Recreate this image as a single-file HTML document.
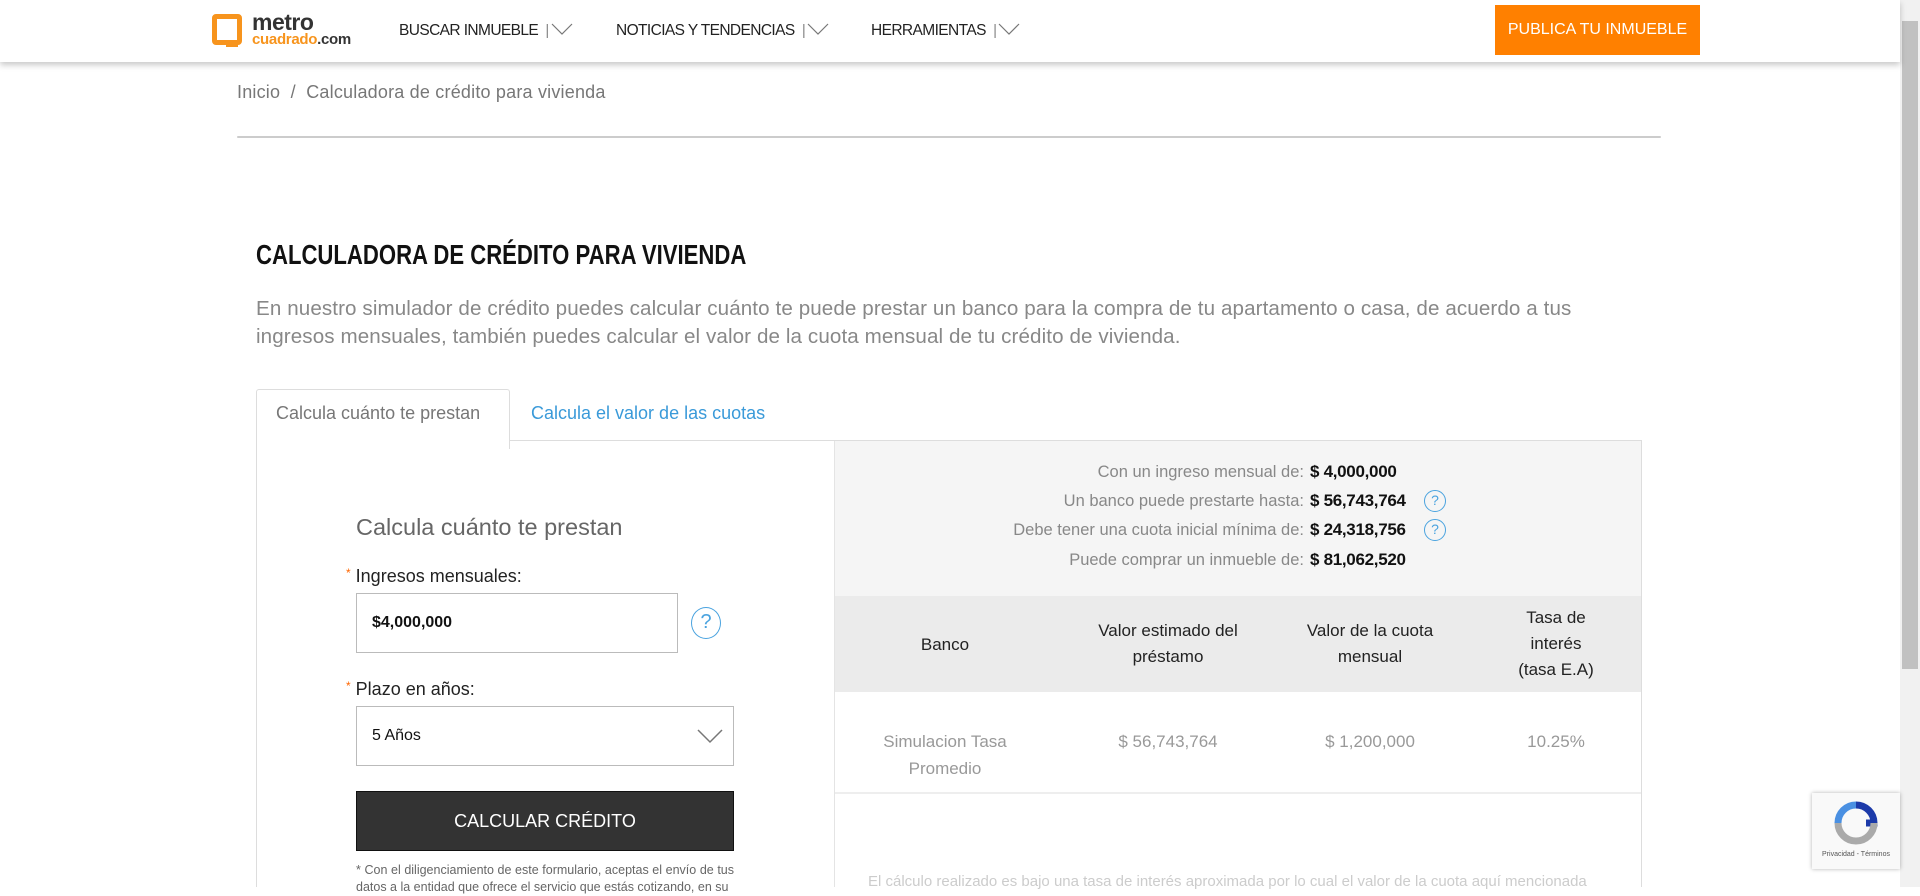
<!DOCTYPE html>
<html><head><meta charset="utf-8"><style>
*{box-sizing:border-box;margin:0;padding:0}
body{width:1920px;height:887px;overflow:hidden;background:#fff;font-family:"Liberation Sans",sans-serif;position:relative}
.a{position:absolute;white-space:nowrap}
.hdr{position:absolute;left:0;top:0;width:1900px;height:62px;background:#fff;box-shadow:0 3px 6px rgba(0,0,0,.22);z-index:2}
.nav{font-size:15.5px;color:#222;top:22px;letter-spacing:-0.6px}
.nav .c{color:#888;font-size:15px}
.sb{position:absolute;left:1900px;top:0;width:20px;height:887px;background:#f1f1f1}
.sb div{position:absolute;left:2px;top:21px;width:16px;height:648px;background:#c1c1c1}
.lbl{font-size:16.5px;color:#888;text-align:right;width:420px;left:884px}
.val{font-size:17px;color:#111;left:1310px;font-weight:bold;letter-spacing:-0.3px}
.q{position:absolute;width:22px;height:22px;border:1.5px solid #4aa3df;border-radius:50%;color:#4aa3df;font-size:14px;text-align:center;line-height:19px}
.th{font-size:17px;color:#222;text-align:center;line-height:26px}
.td{font-size:17px;color:#999;text-align:center;line-height:27px}
</style></head><body>
<div class="hdr">
 <div class="a" style="left:212px;top:14px;width:30px;height:31px;border:5px solid #f7941d;border-radius:4px"></div>
 <div class="a" style="left:226px;top:42px;width:12px;height:5px;background:#f7941d"></div>
 <div class="a" style="left:252px;top:9px;font-size:23px;font-weight:bold;color:#333;letter-spacing:-0.5px">metro</div>
 <div class="a" style="left:252px;top:31px;font-size:15px;font-weight:bold;color:#f7941d;letter-spacing:-0.3px">cuadrado<span style="color:#333">.com</span></div>
 <div class="a nav" style="left:399px">BUSCAR INMUEBLE <span class="c">&nbsp;|</span><svg width="22" height="12" style="margin-left:2px"><path d="M1 1 L11 11 L21 1" fill="none" stroke="#777" stroke-width="1.2"/></svg></div>
 <div class="a nav" style="left:616px">NOTICIAS Y TENDENCIAS <span class="c">&nbsp;|</span><svg width="22" height="12" style="margin-left:2px"><path d="M1 1 L11 11 L21 1" fill="none" stroke="#777" stroke-width="1.2"/></svg></div>
 <div class="a nav" style="left:871px">HERRAMIENTAS <span class="c">&nbsp;|</span><svg width="22" height="12" style="margin-left:2px"><path d="M1 1 L11 11 L21 1" fill="none" stroke="#777" stroke-width="1.2"/></svg></div>
 <div class="a" style="left:1495px;top:5px;width:205px;height:50px;background:#ff8000;color:#fff;font-size:16px;text-align:center;line-height:50px">PUBLICA TU INMUEBLE</div>
</div>
<div class="sb"><div></div></div>
<div class="a" style="left:237px;top:82px;font-size:18px;color:#777;letter-spacing:0.2px">Inicio &nbsp;/ &nbsp;Calculadora de crédito para vivienda</div>
<div class="a" style="left:237px;top:136px;width:1424px;height:2px;background:#ccc;border-radius:2px"></div>
<div class="a" style="left:256px;top:239px;font-size:28px;font-weight:bold;color:#111;transform:scaleX(.79);transform-origin:left">CALCULADORA DE CRÉDITO PARA VIVIENDA</div>
<div class="a" style="left:256px;top:295px;font-size:20.6px;color:#888;line-height:28px;white-space:normal;width:1340px;letter-spacing:0.1px">En nuestro simulador de crédito puedes calcular cuánto te puede prestar un banco para la compra de tu apartamento o casa, de acuerdo a tus ingresos mensuales, también puedes calcular el valor de la cuota mensual de tu crédito de vivienda.</div>
<!-- tabs -->
<div class="a" style="left:256px;top:389px;width:254px;height:60px;border:1px solid #ddd;border-bottom:none;border-radius:3px 3px 0 0;background:#fff;z-index:1"></div>
<div class="a" style="left:276px;top:403px;font-size:18px;color:#777;z-index:1">Calcula cuánto te prestan</div>
<div class="a" style="left:531px;top:403px;font-size:18px;color:#3a9ad9">Calcula el valor de las cuotas</div>
<div class="a" style="left:509px;top:440px;width:1133px;height:1px;background:#ddd"></div>
<div class="a" style="left:256px;top:440px;width:1px;height:447px;background:#ddd"></div>
<div class="a" style="left:1641px;top:440px;width:1px;height:447px;background:#ddd"></div>
<!-- left form -->
<div class="a" style="left:356px;top:514px;font-size:23.5px;color:#666">Calcula cuánto te prestan</div>
<div class="a" style="left:346px;top:566px;font-size:18px;color:#222"><span style="color:#f60;font-size:12px;vertical-align:top">*</span> Ingresos mensuales:</div>
<div class="a" style="left:356px;top:593px;width:322px;height:60px;border:1px solid #bbb;font-size:16px;color:#111;padding-left:15px;line-height:58px;font-weight:bold">$4,000,000</div>
<div class="q" style="left:691px;top:607px;width:30px;height:32px;font-size:20px;line-height:28px">?</div>
<div class="a" style="left:346px;top:679px;font-size:18px;color:#222"><span style="color:#f60;font-size:12px;vertical-align:top">*</span> Plazo en años:</div>
<div class="a" style="left:356px;top:706px;width:378px;height:60px;border:1px solid #bbb;font-size:16px;color:#111;padding-left:15px;line-height:58px">5 Años</div>
<svg class="a" style="left:697px;top:729px" width="26" height="15"><path d="M1 1 L13 13 L25 1" fill="none" stroke="#777" stroke-width="1.5"/></svg>
<div class="a" style="left:356px;top:791px;width:378px;height:60px;background:#333;border:1px solid #111;color:#fff;font-size:18px;text-align:center;line-height:58px">CALCULAR CRÉDITO</div>
<div class="a" style="left:356px;top:862px;width:378px;font-size:12.5px;color:#666;white-space:normal;text-align:justify;line-height:17px">* Con el diligenciamiento de este formulario, aceptas el envío de tus datos a la entidad que ofrece el servicio que estás cotizando, en su</div>
<!-- right panel -->
<div class="a" style="left:835px;top:441px;width:806px;height:446px;background:#f5f5f5"></div>
<div class="a" style="left:834px;top:441px;width:1px;height:446px;background:#e4e4e4"></div>
<div class="a lbl" style="top:463px">Con un ingreso mensual de:</div><div class="a val" style="top:462px">$ 4,000,000</div>
<div class="a lbl" style="top:492px">Un banco puede prestarte hasta:</div><div class="a val" style="top:491px">$ 56,743,764</div><div class="q" style="left:1424px;top:490px">?</div>
<div class="a lbl" style="top:521px">Debe tener una cuota inicial mínima de:</div><div class="a val" style="top:520px">$ 24,318,756</div><div class="q" style="left:1424px;top:519px">?</div>
<div class="a lbl" style="top:551px">Puede comprar un inmueble de:</div><div class="a val" style="top:550px">$ 81,062,520</div>
<div class="a" style="left:835px;top:596px;width:806px;height:96px;background:#ebebeb"></div>
<div class="a" style="left:835px;top:692px;width:806px;height:195px;background:#fff"></div>
<div class="a" style="left:835px;top:792px;width:806px;height:2px;background:#eee"></div>
<div class="a th" style="left:865px;width:160px;top:632px">Banco</div>
<div class="a th" style="left:1068px;width:200px;top:618px">Valor estimado del<br>préstamo</div>
<div class="a th" style="left:1270px;width:200px;top:618px">Valor de la cuota<br>mensual</div>
<div class="a th" style="left:1486px;width:140px;top:605px">Tasa de<br>interés<br>(tasa E.A)</div>
<div class="a td" style="left:855px;width:180px;top:728px">Simulacion Tasa<br>Promedio</div>
<div class="a td" style="left:1068px;width:200px;top:728px">$ 56,743,764</div>
<div class="a td" style="left:1270px;width:200px;top:728px">$ 1,200,000</div>
<div class="a td" style="left:1486px;width:140px;top:728px">10.25%</div>
<div class="a" style="left:868px;top:873px;font-size:15px;color:#ccc">El cálculo realizado es bajo una tasa de interés aproximada por lo cual el valor de la cuota aquí mencionada</div>
<!-- recaptcha -->
<div class="a" style="left:1812px;top:793px;width:88px;height:76px;background:#f9f9f9;box-shadow:0 0 4px rgba(0,0,0,.3)">
 <svg style="position:absolute;left:22px;top:8px" width="44" height="44"><path d="M22 4 A18 18 0 0 1 40 22 L32 22" fill="none" stroke="#1c3aa9" stroke-width="7"/><path d="M4 22 A18 18 0 0 1 22 4" fill="none" stroke="#4a90e2" stroke-width="7"/><path d="M40 22 A18 18 0 0 1 4 22" fill="none" stroke="#aaa" stroke-width="7"/></svg>
 <div style="position:absolute;left:0;width:88px;top:58px;font-size:7px;color:#555;text-align:center">Privacidad - Términos</div>
</div>
</body></html>
